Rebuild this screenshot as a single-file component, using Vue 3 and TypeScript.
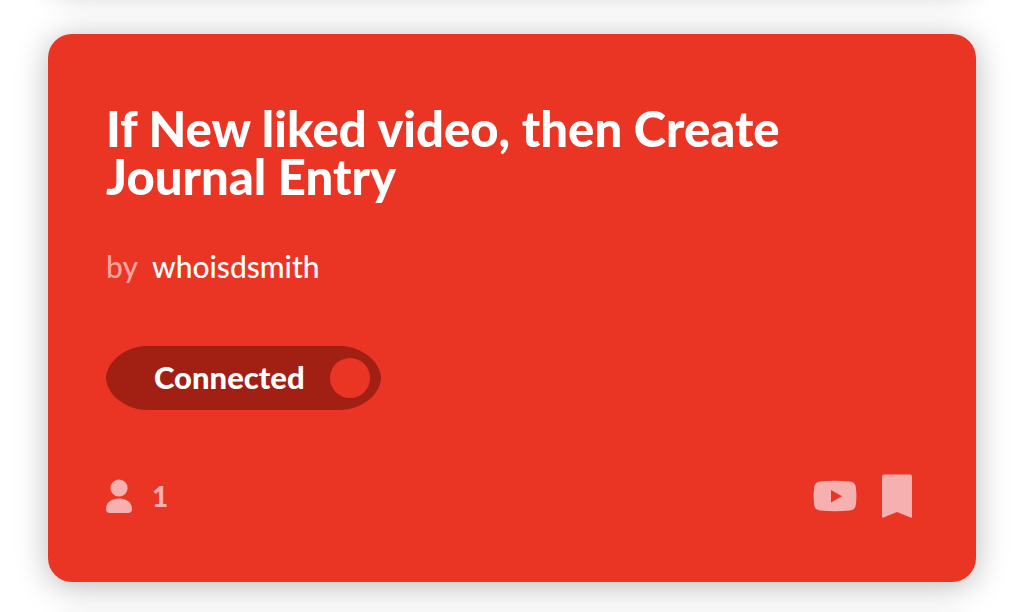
<script setup lang="ts">
import { ref } from 'vue'

interface Applet {
  title: string
  author: string
  users: number
}

const applet: Applet = {
  title: 'If New liked video, then Create Journal Entry',
  author: 'whoisdsmith',
  users: 1,
}
const connected = ref<boolean>(true)
</script>

<template>
  <main class="feed">
    <div class="card edge previous"></div>
    <article class="card">
      <h2 class="title">{{ applet.title }}</h2>
      <p class="byline">
        <span class="by">by</span>
        <a class="author" href="#">{{ applet.author }}</a>
      </p>
      <label class="toggle">
        <span>Connected</span>
        <input v-model="connected" class="knob" type="checkbox" role="switch" />
      </label>
      <footer class="footer">
        <div class="users">
          <svg width="26" height="36" viewBox="0 0 26 36" aria-hidden="true">
            <circle cx="13" cy="10" r="8.6" />
            <path d="M0 31C0 24 6 20.500 13 20.500S26 24 26 31Q26 35 22 35H4Q0 35 0 31Z" />
          </svg>
          <span>{{ applet.users }}</span>
        </div>
        <div class="actions">
          <a href="#" class="icon" aria-label="YouTube">
            <svg width="44" height="44" viewBox="0 0 44 44" aria-hidden="true">
              <path fill-rule="evenodd" d="M7 7.500Q22 6 37 7.500Q42 8 42.800 13Q44 22 42.800 31Q42 36 37 36.500Q22 38 7 36.500Q2 36 1.200 31Q0 22 1.200 13Q2 8 7 7.500ZM18 16V28.500L29 22.200Z" />
            </svg>
          </a>
          <button type="button" class="icon" aria-label="Bookmark">
            <svg width="30" height="44" viewBox="0 0 30 44" aria-hidden="true">
              <path d="M2 .5H28Q30 .5 30 2.500V42.500Q30 44.200 28.500 43.400L15 38L1.500 43.400Q0 44.200 0 42.500V2.500Q0 .5 2 .5Z" />
            </svg>
          </button>
        </div>
      </footer>
    </article>
    <div class="card edge"></div>
  </main>
</template>

<style>
body {
  margin: 0;
  background: #fff;
}
</style>

<style scoped>
.feed {
  box-sizing: border-box;
  height: 100vh;
  overflow: hidden;
  display: flex;
  flex-direction: column;
  gap: 48px;
  padding: 0 48px;
  font-family: Lato, "Open Sans", sans-serif;
  color: #fff;
}
.card {
  box-sizing: border-box;
  flex: none;
  padding: 70px 64px 64px 58px;
  border-radius: 24px;
  background: #ea3524;
  box-shadow: 0 4px 32px rgba(0, 0, 0, 0.28);
}
.edge {
  height: 160px;
}
.previous {
  margin-top: -174px;
}
.title {
  margin: 0;
  font-size: 49px;
  line-height: 48px;
  font-weight: 900;
}
.byline {
  display: flex;
  gap: 14px;
  margin: 48px 0 0;
  font-size: 30px;
  line-height: 36px;
  font-weight: 500;
}
.by {
  color: #f7a59d;
}
.author {
  color: #fff;
  text-decoration: none;
}
.toggle {
  box-sizing: border-box;
  display: flex;
  align-items: center;
  gap: 25px;
  width: fit-content;
  height: 64px;
  margin-top: 62px;
  padding: 0 11px 2px 48px;
  border-radius: 40px / 32px;
  corner-shape: superellipse(0.9);
  background: #a21f14;
  font-size: 31px;
  font-weight: 900;
  cursor: pointer;
}
.knob {
  appearance: none;
  width: 40px;
  height: 40px;
  margin: 2px 0 0;
  border-radius: 50%;
  background: #ea3524;
}
.footer {
  display: flex;
  justify-content: space-between;
  align-items: center;
  margin-top: 64px;
  color: #f5b0af;
}
.users {
  display: flex;
  align-items: center;
  gap: 20px;
  font-size: 28px;
  line-height: 36px;
  font-weight: 900;
}
.actions {
  display: flex;
  gap: 25px;
}
.icon {
  display: flex;
  padding: 0;
  border: 0;
  background: none;
  color: inherit;
}
svg {
  display: block;
  fill: currentColor;
}
</style>
